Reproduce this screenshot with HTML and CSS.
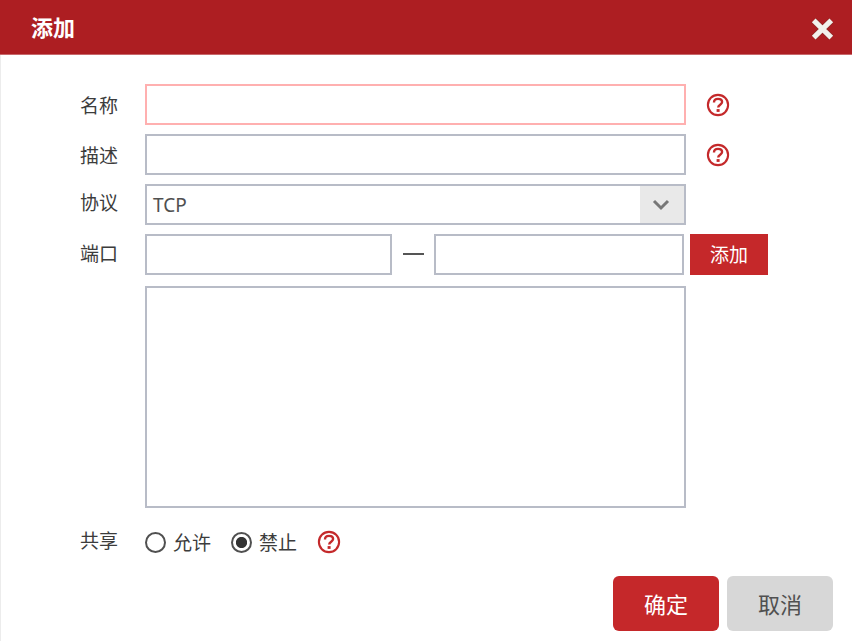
FILE: index.html
```html
<!DOCTYPE html>
<html lang="zh-CN">
<head>
<meta charset="utf-8">
<title>添加</title>
<link rel="stylesheet" href="styles.css">
</head>
<body>
<svg class="symbols" aria-hidden="true">
  <symbol id="help" viewBox="0 0 24 24">
    <circle cx="12" cy="12" r="10.1" fill="none" stroke="currentColor" stroke-width="2.1"/>
    <path d="M8 9.4C8 7.2 9.6 5.9 12 5.9s4.1 1.2 4.1 3.2c0 2.6-3.9 2.7-3.9 5.4" fill="none" stroke="currentColor" stroke-width="2.4"/>
    <rect x="10.6" y="16.1" width="3" height="2.8" fill="currentColor"/>
  </symbol>
</svg>
<div class="dialog">
  <header class="titlebar">
    <h1>添加</h1>
    <svg class="close" viewBox="0 0 26 26"><path class="shade" d="M4.2 4.4l17.6 17.2M21.8 4.4L4.2 21.6"/><path d="M4.2 4.4l17.6 17.2M21.8 4.4L4.2 21.6"/></svg>
  </header>
  <main class="form">
    <div class="row">
      <span class="label low">名称</span>
      <div class="field invalid"></div>
      <svg class="help"><use href="#help"/></svg>
    </div>
    <div class="row">
      <span class="label low">描述</span>
      <div class="field"></div>
      <svg class="help"><use href="#help"/></svg>
    </div>
    <div class="row protocol">
      <span class="label">协议</span>
      <div class="field select"><span>TCP</span><div class="arrow"><svg viewBox="0 0 20 14"><path d="M3 3l7 7 7-7"/></svg></div></div>
    </div>
    <div class="row ports">
      <span class="label">端口</span>
      <div class="field from"></div>
      <span class="dash"></span>
      <div class="field to"></div>
      <div class="add">添加</div>
    </div>
    <div class="field list"></div>
    <div class="row share">
      <span class="label">共享</span>
      <span class="radio"></span><span class="option">允许</span>
      <span class="radio checked"></span><span class="option">禁止</span>
      <svg class="help"><use href="#help"/></svg>
    </div>
  </main>
  <footer class="actions">
    <div class="button primary">确定</div>
    <div class="button">取消</div>
  </footer>
</div>
</body>
</html>
```
FILE: styles.css
```css
* { box-sizing: border-box; }

body {
  margin: 0;
  font: 19px/28px "Noto Sans", "Noto Sans CJK SC", sans-serif;
  color: #3c3c3c;
  background: #fff;
}

.symbols { display: none; }

.dialog {
  height: 641px;
  overflow: hidden;
}

.titlebar {
  display: flex;
  align-items: center;
  justify-content: space-between;
  height: 55px;
  padding: 0 16px 0 31px;
  background: #ad1e22;
  border-bottom: 1px solid #c8686b;
}

.titlebar h1 {
  margin: 0;
  font-size: 22px;
  font-weight: 700;
  color: #fff;
}

.close {
  width: 27px;
  height: 26px;
  margin-top: 4px;
  fill: none;
  stroke: #f2f1ec;
  stroke-width: 5.2;
}

.close .shade { stroke: #8d2826; stroke-width: 6.4; }

.form {
  height: 521px;
  padding: 29px 0 0 79px;
  border-left: 1px solid #ececec;
}

.row {
  display: flex;
  align-items: center;
  height: 41px;
  margin-bottom: 9px;
}

.label {
  width: 65px;
  line-height: 28px;
}

.low { margin-top: 2px; }

.protocol .label { margin-top: -3px; }

.ports .label { margin-top: -1px; }

.field {
  width: 541px;
  height: 41px;
  border: 2px solid #b8bcc7;
  background: #fff;
}

.invalid { border-color: #ffb0b0; }

.help {
  width: 24px;
  height: 24px;
  margin-left: 20px;
  color: #c4292b;
}

.select {
  display: flex;
  align-items: center;
  justify-content: space-between;
  padding-left: 6px;
  color: #505050;
}

.select span { padding-top: 1px; }

.arrow {
  display: flex;
  align-items: center;
  justify-content: center;
  width: 44px;
  height: 37px;
  padding-right: 2px;
  background: #e9e9e9;
}

.arrow svg {
  width: 20px;
  height: 14px;
  fill: none;
  stroke: #777;
  stroke-width: 3;
}

.ports { margin-bottom: 11px; }
.from { width: 247px; }
.to { width: 250px; }

.dash {
  width: 21px;
  height: 2px;
  margin: -2px 10px 0 11px;
  background: #555;
}

.add {
  width: 78px;
  height: 41px;
  margin-left: 6px;
  line-height: 43px;
  text-align: center;
  color: #fff;
  background: #c5282a;
}

.list {
  height: 222px;
  margin-left: 65px;
}

.share {
  height: 28px;
  margin: 20px 0 0;
}

.share .label { margin-top: -2px; }

.radio {
  width: 21px;
  height: 21px;
  margin-top: 1px;
  border: 2px solid #505050;
  border-radius: 50%;
}

.checked {
  background: radial-gradient(circle, #333 5.2px, transparent 6px);
}

.option {
  width: 58px;
  margin-top: 2px;
  padding-left: 7px;
}

.option + .radio { margin-left: 7px; }

.share .help { margin-left: 7px; }

.share .option { flex-shrink: 0; }

.actions {
  display: flex;
  justify-content: flex-end;
  gap: 8px;
  height: 65px;
  padding-right: 19px;
  border-left: 1px solid #ececec;
}

.button {
  width: 106px;
  height: 55px;
  border-radius: 6px;
  font-size: 22px;
  line-height: 56px;
  text-align: center;
  color: #505050;
  background: #d7d7d7;
}

.primary {
  color: #fff;
  background: #c5282a;
}
```
